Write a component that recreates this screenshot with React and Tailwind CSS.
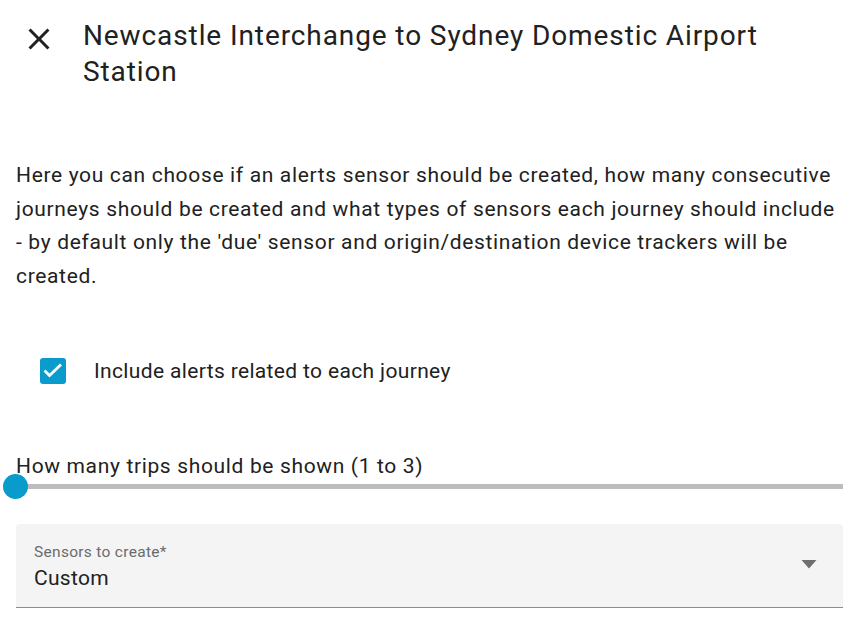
import React from 'react';

const App = () => {
    return (
        <div className="w-[850px] h-[626px] bg-white overflow-hidden text-[#212121]" style={{ fontFamily: 'Roboto, "Liberation Sans", sans-serif' }}>
            {/* header */}
            <div className="flex items-start pt-[18px]">
                <button className="w-[80px] shrink-0 flex justify-center pt-[3px] pr-[2px]">
                    <svg width="36" height="36" viewBox="0 0 24 24" fill="#212121">
                        <path d="M19,6.41L17.59,5L12,10.59L6.41,5L5,6.41L10.59,12L5,17.59L6.41,19L12,13.41L17.59,19L19,17.59L13.41,12L19,6.41Z" />
                    </svg>
                </button>
                <h2 className="text-[28px] leading-[36px] font-normal tracking-[0.9px] pl-[3px] pr-[40px]">
                    Newcastle Interchange to Sydney Domestic Airport Station
                </h2>
            </div>

            <div className="pl-[16px] pr-[7px]">
                <p className="mt-[69px] text-[21px] leading-[33.5px] tracking-[0.66px]">
                    Here you can choose if an alerts sensor should be created, how many consecutive journeys should be created and what types of sensors each journey should include - by default only the 'due' sensor and origin/destination device trackers will be created.
                </p>

                {/* checkbox */}
                <div className="flex items-center mt-[64px] pl-[24px]">
                    <div className="w-[26px] h-[26px] rounded-[3px] bg-[#0a9bcd] flex items-center justify-center">
                        <svg width="26" height="26" viewBox="0 0 26 26" fill="none" stroke="white" strokeWidth="2.8">
                            <path d="M4.5 12.5L9.5 17.5L21 6.5" />
                        </svg>
                    </div>
                    <span className="ml-[28px] text-[21px] leading-[28px] tracking-[0.35px]">Include alerts related to each journey</span>
                </div>

                {/* slider */}
                <div className="mt-[67px]">
                    <div className="text-[21px] leading-[28px] tracking-[0.65px]">How many trips should be shown (1 to 3)</div>
                    <div className="relative h-[12px] flex items-center">
                        <div className="w-full h-[5px] bg-[#bdbdbd]" />
                        <div className="absolute left-[-13px] top-[-6px] w-[25px] h-[25px] rounded-full bg-[#0a9bcd]" />
                    </div>
                </div>

                {/* select */}
                <div className="mt-[32px] h-[84px] bg-[#f4f4f4] rounded-t-[4px] border-b border-[#8c8c8c] flex items-center justify-between pl-[18px] pr-[26px]">
                    <div className="pt-[4px]">
                        <div className="text-[15.5px] leading-[18px] text-[#6b6b6b] tracking-[0.3px]">Sensors to create*</div>
                        <div className="text-[21px] leading-[30px] mt-[2px] tracking-[0.3px]">Custom</div>
                    </div>
                    <svg width="16" height="9" viewBox="0 0 16 9" className="mb-[2px]">
                        <path d="M0.5 0h15L8 8.5z" fill="#6e6e6e" />
                    </svg>
                </div>
            </div>
        </div>
    );
};

export default App;
